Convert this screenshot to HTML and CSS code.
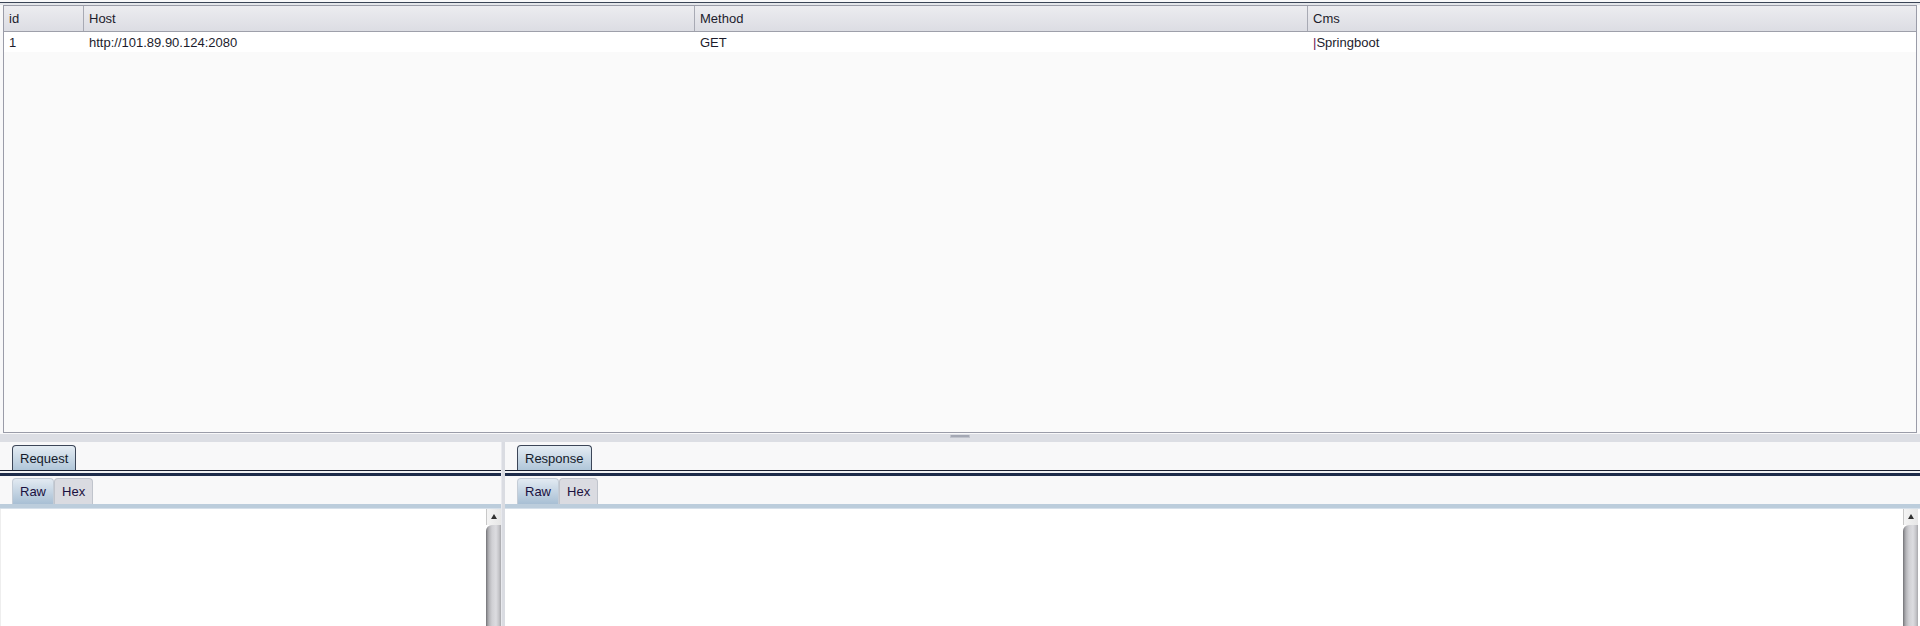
FILE: index.html
```html
<!DOCTYPE html>
<html>
<head>
<meta charset="utf-8">
<link rel="stylesheet" href="styles.css">
</head>
<body>
<div class="app">
  <div class="topline"></div>
  <div class="table">
    <div class="thead">
      <div class="cell c-id">id</div>
      <div class="cell c-host">Host</div>
      <div class="cell c-method">Method</div>
      <div class="cell c-cms">Cms</div>
    </div>
    <div class="trow">
      <div class="cell c-id">1</div>
      <div class="cell c-host">http://101.89.90.124:2080</div>
      <div class="cell c-method">GET</div>
      <div class="cell c-cms"><span class="bar">|</span>Springboot</div>
    </div>
  </div>
  <div class="splitter"><div class="grip"></div></div>
  <div class="panes">
    <div class="pane left">
      <div class="tabstrip"><div class="tab sel">Request</div></div>
      <div class="tabline"></div>
      <div class="substrip"><div class="stab sel">Raw</div><div class="stab">Hex</div></div>
      <div class="subline"></div>
      <div class="content">
        <div class="scroll"><div class="up"><span class="tri"></span></div><div class="track"></div></div>
      </div>
    </div>
    <div class="vdiv"></div>
    <div class="pane right">
      <div class="tabstrip"><div class="tab sel">Response</div></div>
      <div class="tabline"></div>
      <div class="substrip"><div class="stab sel">Raw</div><div class="stab">Hex</div></div>
      <div class="subline"></div>
      <div class="content">
        <div class="scroll"><div class="up"><span class="tri"></span></div><div class="track"></div></div>
      </div>
    </div>
  </div>
</div>
</body>
</html>
```
FILE: styles.css
```css
html, body {
  margin: 0;
  padding: 0;
  height: 626px;
  overflow: hidden;
  background: #f8f8f9;
  font-family: "Liberation Sans", Arial, sans-serif;
  font-size: 13px;
  color: #1c1c2c;
}
.app {
  display: flex;
  flex-direction: column;
  height: 626px;
}
.topline {
  height: 1px;
  margin-top: 2px;
  background: #3a4456;
  border-bottom: 2px solid #e4e6ea;
}
.table {
  margin: 0 3px;
  height: 426px;
  border: 1px solid #9a9ca8;
  background: #fafafa;
}
.thead {
  display: flex;
  height: 25px;
  background: linear-gradient(#ececf0, #dcdde3);
  border-bottom: 1px solid #9ea0aa;
}
.trow {
  display: flex;
  height: 20px;
  background: #ffffff;
}
.cell {
  box-sizing: border-box;
  padding-left: 5px;
  display: flex;
  align-items: center;
  white-space: nowrap;
}
.thead .cell { border-right: 1px solid #a8aab4; }
.thead .cell.c-cms { border-right: none; }
.c-id { width: 80px; }
.c-host { width: 611px; }
.c-method { width: 613px; }
.c-cms { flex: 1; }
.trow .cell { padding-top: 1px; }
.bar { color: #6a1a5a; }
.splitter {
  height: 8px;
  margin-top: 1px;
  background: #dcdee4;
  display: flex;
  justify-content: center;
}
.grip {
  width: 18px;
  height: 2px;
  margin-top: 1px;
  background: #a4a8b4;
  border: 1px solid #c0c3cc;
  border-top: none;
}
.panes {
  flex: 1;
  display: flex;
  min-height: 0;
}
.pane {
  display: flex;
  flex-direction: column;
  background: #f8f8f9;
}
.pane.left { width: 501px; }
.pane.right { flex: 1; }
.vdiv {
  width: 4px;
  background: #dadce2;
  border-left: 1px solid #e8e9ee;
  box-sizing: border-box;
}
.tabstrip {
  height: 28px;
  display: flex;
  align-items: flex-end;
  padding-left: 12px;
}
.tab {
  box-sizing: border-box;
  height: 25px;
  padding: 0 7px;
  display: flex;
  align-items: center;
  border: 1px solid #3c4658;
  border-bottom: none;
  border-radius: 4px 4px 0 0;
  background: linear-gradient(#e4ecf3, #b0c6d9);
  font-size: 13px;
  color: #141a2a;
}
.tabline {
  height: 1px;
  background: #1a2030;
  border-bottom: 2px solid #f2f3f5;
  box-shadow: 0 3px 0 #1e2c4a;
  margin-bottom: 1px;
}
.substrip {
  height: 30px;
  display: flex;
  align-items: flex-end;
  padding-left: 12px;
}
.stab {
  box-sizing: border-box;
  height: 26px;
  padding: 0 7px;
  display: flex;
  align-items: center;
  border: 1px solid #c0c4cc;
  border-bottom: none;
  border-radius: 4px 4px 0 0;
  background: #dadbe1;
  font-size: 13px;
  color: #1a1040;
}
.stab.sel {
  background: linear-gradient(#e2eaf2, #a8bfd4);
  border-color: #c4ccd6;
}
.subline {
  height: 4px;
  background: #bccddc;
  border-bottom: 1px solid #d6e0ea;
}
.content {
  flex: 1;
  background: #ffffff;
  display: flex;
  justify-content: flex-end;
  border-left: 1px solid #eeeeee;
}
.pane.right .content { padding-right: 2px; border-left: none; }
.scroll {
  width: 15px;
  display: flex;
  flex-direction: column;
}
.up {
  height: 16px;
  background: linear-gradient(90deg, #f4f4f4, #e6e6e6);
  border-left: 1px solid #c8c8c8;
  display: flex;
  justify-content: center;
  padding-top: 5px;
  box-sizing: border-box;
}
.tri {
  width: 0;
  height: 0;
  border-left: 3px solid transparent;
  border-right: 3px solid transparent;
  border-bottom: 5px solid #303030;
}
.track {
  flex: 1;
  border-radius: 6px 0 0 0;
  background: linear-gradient(90deg, #6e6e72 0, #8e8e92 1px, #b4b4b8 3px, #d0d0d4 6px, #dcdce0 10px, #c4c4c8 13px, #a8a8ac 15px);
}
```
